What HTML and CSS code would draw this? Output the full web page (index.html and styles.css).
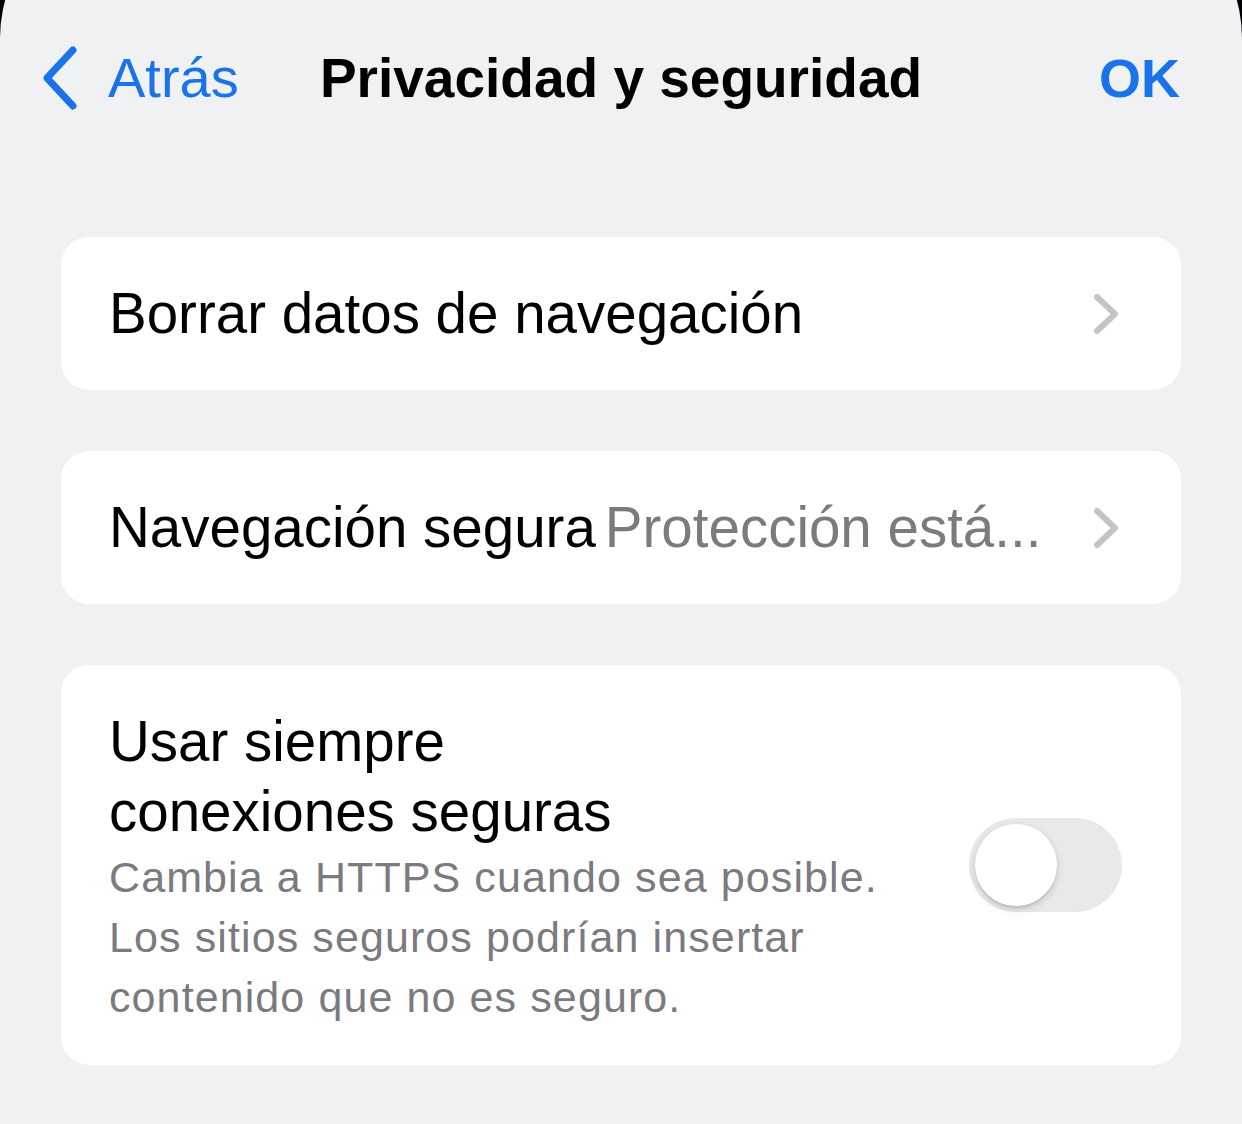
FILE: index.html
```html
<!DOCTYPE html>
<html lang="es">
<head>
    <meta charset="UTF-8">
    <meta name="viewport" content="width=device-width, initial-scale=1.0">
    <title>Privacidad y seguridad</title>
    <link rel="stylesheet" href="styles.css">
</head>
<body>
    <div class="sheet">
        <header class="nav-bar">
            <div class="nav-left">
                <a class="nav-back" href="#">
                    <svg class="back-icon" viewBox="0 0 40 64" width="40" height="64">
                        <path d="M33 4 L7 32 L33 60" fill="none" stroke="currentColor" stroke-width="7" stroke-linecap="round" stroke-linejoin="round"/>
                    </svg>
                    <span>Atrás</span>
                </a>
            </div>
            <h1 class="nav-title">Privacidad y seguridad</h1>
            <div class="nav-right">
                <a class="nav-done" href="#">OK</a>
            </div>
        </header>

        <div class="settings-list">
            <div class="settings-card">
                <div class="row">
                    <span class="row-label">Borrar datos de navegación</span>
                    <svg class="chevron" viewBox="0 0 24 40" width="24" height="40">
                        <path d="M3 3 L21 20 L3 37" fill="none" stroke="currentColor" stroke-width="6" stroke-linecap="round" stroke-linejoin="round"/>
                    </svg>
                </div>
            </div>

            <div class="settings-card">
                <div class="row">
                    <span class="row-label fixed">Navegación segura</span>
                    <span class="row-value">Protección está...</span>
                    <svg class="chevron" viewBox="0 0 24 40" width="24" height="40">
                        <path d="M3 3 L21 20 L3 37" fill="none" stroke="currentColor" stroke-width="6" stroke-linecap="round" stroke-linejoin="round"/>
                    </svg>
                </div>
            </div>

            <div class="settings-card">
                <div class="row row-toggle">
                    <div class="row-text">
                        <div class="row-label multi">Usar siempre<br>conexiones seguras</div>
                        <div class="row-desc">Cambia a HTTPS cuando sea posible. Los sitios seguros podrían insertar contenido que no es seguro.</div>
                    </div>
                    <div class="switch">
                        <div class="switch-knob"></div>
                    </div>
                </div>
            </div>
        </div>
    </div>
</body>
</html>
```

FILE: styles.css
```css
* { margin: 0; padding: 0; box-sizing: border-box; }

html, body {
    height: 100%;
}

body {
    background: #000;
    overflow: hidden;
    font-family: "Liberation Sans", Arial, sans-serif;
    color: #000;
}

/* screen sheet, its rounded corners run off the top edge */
.sheet {
    background: #f0f1f3;
    min-height: calc(100% + 102px);
    margin-top: -102px;
    padding-top: 102px;
    border-radius: 140px 140px 0 0;
}

/* top navigation */
.nav-bar {
    height: 155px;
    display: grid;
    grid-template-columns: 1fr auto 1fr;
    align-items: center;
    padding: 0 40px;
}

.nav-back,
.nav-done {
    color: #1a73e8;
    text-decoration: none;
}

.nav-back {
    display: flex;
    align-items: center;
    gap: 28px;
    font-size: 56px;
}

.back-icon {
    display: block;
}

.nav-title {
    font-size: 55px;
    font-weight: 700;
}

.nav-right {
    display: flex;
    justify-content: flex-end;
    padding-right: 22px;
}

.nav-done {
    font-size: 54px;
    font-weight: 700;
}

/* grouped cards */
.settings-list {
    padding: 82px 61px 0;
    display: flex;
    flex-direction: column;
    gap: 61px;
}

.settings-card {
    background: #fff;
    border-radius: 28px;
}

.row {
    min-height: 153px;
    display: flex;
    align-items: center;
    padding: 0 63px 0 48px;
}

.row-label {
    font-size: 56.5px;
    flex: 1;
    white-space: nowrap;
}

.row-label.fixed {
    flex: none;
    margin-right: 9px;
}

.row-value {
    flex: 1;
    font-size: 56.5px;
    color: #7a7a7f;
    white-space: nowrap;
    overflow: hidden;
    margin-right: 40px;
}

.chevron {
    color: #c4c4c7;
    display: block;
    flex: none;
}

/* toggle row */
.row-toggle {
    padding-top: 42px;
    padding-bottom: 38px;
    gap: 30px;
}

.row-text {
    flex: 1;
}

.row-label.multi {
    line-height: 70px;
    white-space: normal;
}

.row-desc {
    font-size: 43px;
    letter-spacing: 1.1px;
    line-height: 60px;
    color: #7a7a7f;
    max-width: 800px;
}

.switch {
    width: 153px;
    height: 94px;
    border-radius: 47px;
    background: #e9e9eb;
    padding: 6px;
    flex: none;
    margin-right: -4px;
    margin-top: -4px;
}

.switch-knob {
    width: 82px;
    height: 82px;
    border-radius: 50%;
    background: #fff;
    box-shadow: 0 3px 8px rgba(0,0,0,0.15), 0 3px 1px rgba(0,0,0,0.06);
}
```
